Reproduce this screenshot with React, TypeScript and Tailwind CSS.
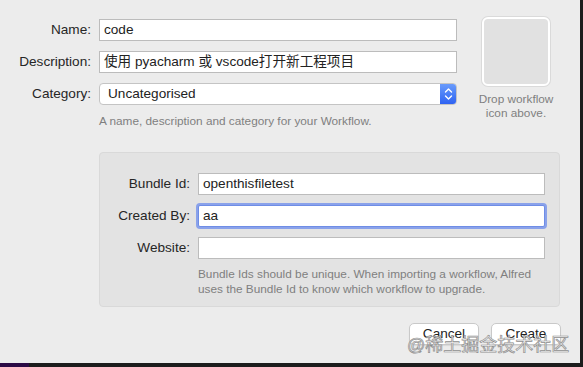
import React from 'react';

const font = "font-['Liberation_Sans','Noto_Sans_CJK_SC',sans-serif]";

const Field = ({ value, focused = false }: { value?: string; focused?: boolean }) => (
  <div
    className={
      'h-[22px] bg-white flex items-center px-[4px] text-[13.6px] text-[#222] ' +
      (focused
        ? 'border border-[#6f8de6] rounded-[2px] shadow-[0_0_0_2px_#8aa2ea]'
        : 'border border-[#bcbcbc]')
    }
  >
    {value}
  </div>
);

const Label = ({ children }: { children: React.ReactNode }) => (
  <div className="h-[22px] flex items-center justify-end text-[13.6px] text-[#262626] whitespace-nowrap">{children}</div>
);

export default function App() {
  return (
    <div className={`w-[583px] h-[367px] bg-[#1c1c1c] flex flex-col overflow-hidden ${font}`}>
      <div className="flex">
        <div className="relative w-[580px] h-[363px] bg-[#ececec]">
          {/* top section */}
          <div className="flex pt-[17px]">
            <div className="pt-[2px]">
              <div className="grid grid-cols-[91px_358px] gap-x-2 gap-y-[10px]">
                <Label>Name:</Label>
                <Field value="code" />
                <Label>Description:</Label>
                <Field value="使用 pyacharm 或 vscode打开新工程项目" />
                <Label>Category:</Label>
                <div className="h-[22px] flex bg-white border border-[#c4c4c4] rounded-[4px] overflow-hidden">
                  <div className="flex-1 flex items-center pl-[8px] text-[13.6px] text-[#222]">Uncategorised</div>
                  <div className="w-[16px] bg-gradient-to-b from-[#6a9bfb] to-[#2f62f2] flex items-center justify-center">
                    <svg width="9" height="14" viewBox="0 0 9 14" fill="none" stroke="white" strokeWidth="1.4" strokeLinecap="round" strokeLinejoin="round">
                      <path d="M1.5 5 L4.5 2 L7.5 5" />
                      <path d="M1.5 9 L4.5 12 L7.5 9" />
                    </svg>
                  </div>
                </div>
              </div>
              <div className="ml-[99px] mt-[9px] text-[11.8px] leading-[14px] text-[#7f7f7f] whitespace-nowrap">
                A name, description and category for your Workflow.
              </div>
            </div>
            <div className="ml-[25px] w-[68px] flex flex-col items-center">
              <div className="w-[68px] h-[69px] shrink-0 rounded-[6px] border-[2px] border-white bg-[#e1e1e1] shadow-[0_0_0_1px_#dadada]" />
              <div className="mt-[6px] text-[11.8px] leading-[14px] text-[#7f7f7f] text-center w-[100px] shrink-0">
                Drop workflow
                <br />
                icon above.
              </div>
            </div>
          </div>

          {/* bundle panel */}
          <div className="ml-[99px] mt-[24px] w-[461px] h-[155px] rounded-[4px] bg-[#e3e3e3] border border-[#d9d9d9] pt-[20px]">
            <div className="grid grid-cols-[90px_347px] gap-x-2 gap-y-[10px]">
              <Label>Bundle Id:</Label>
              <Field value="openthisfiletest" />
              <Label>Created By:</Label>
              <Field value="aa" focused />
              <Label>Website:</Label>
              <Field />
            </div>
            <div className="ml-[98px] mt-[8px] text-[11.8px] leading-[15px] text-[#7f7f7f] whitespace-nowrap">
              Bundle Ids should be unique. When importing a workflow, Alfred
              <br />
              uses the Bundle Id to know which workflow to upgrade.
            </div>
          </div>

          {/* buttons */}
          <div className="flex justify-end gap-[12px] mt-[16px] pr-[19px]">
            <button className="w-[70px] h-[22px] bg-white border border-[#c9c9c9] rounded-[5px] text-[13.6px] text-[#222] shadow-[0_1px_1px_rgba(0,0,0,0.08)]">
              Cancel
            </button>
            <button className="w-[70px] h-[22px] bg-white border border-[#c9c9c9] rounded-[5px] text-[13.6px] text-[#222] shadow-[0_1px_1px_rgba(0,0,0,0.08)]">
              Create
            </button>
          </div>

          {/* watermark */}
          <div className="absolute left-[407px] top-[333px] text-[18px] leading-[24px] text-[#f3f3f3] [-webkit-text-stroke:0.7px_#8f8f8f]">
            @稀土掘金技术社区
          </div>
        </div>
        <div className="flex-1 bg-[#1c1c1c]" />
      </div>
      <div className="h-[4px] flex">
        <div className="w-[29px] bg-[#2b0a45]" />
        <div className="flex-1 bg-[#1c1c1c]" />
      </div>
    </div>
  );
}
